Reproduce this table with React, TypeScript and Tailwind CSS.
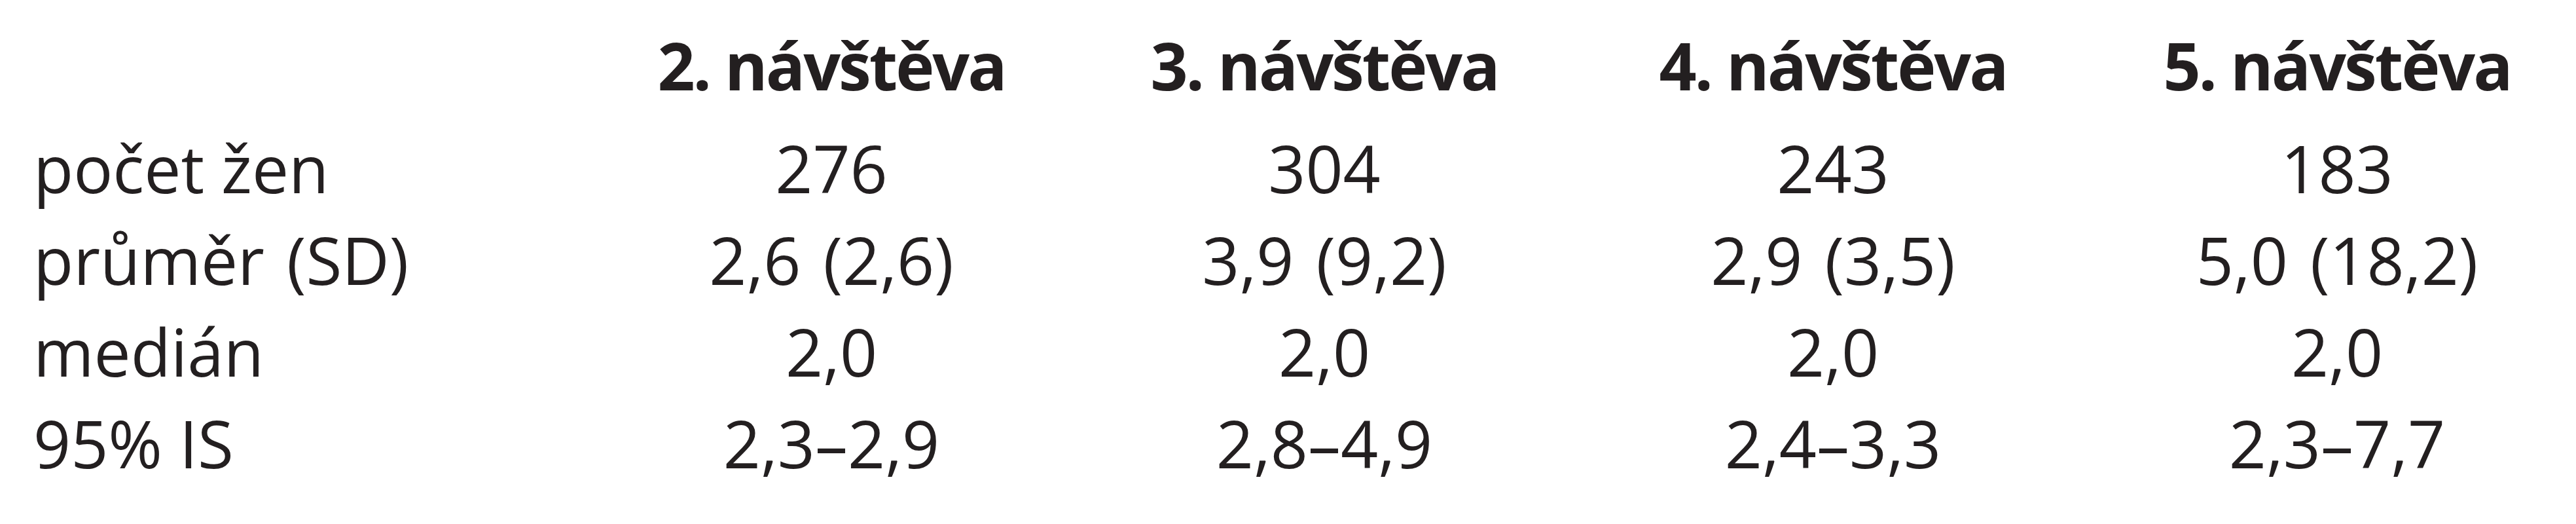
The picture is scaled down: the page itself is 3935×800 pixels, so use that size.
const headers = ["2. návštěva", "3. návštěva", "4. návštěva", "5. návštěva"];

// the parenthesised row sets a slightly wider gap before "("
const rows: [string, string[], string][] = [
  ["počet žen", ["276", "304", "243", "183"], ""],
  ["průměr (SD)", ["2,6 (2,6)", "3,9 (9,2)", "2,9 (3,5)", "5,0 (18,2)"], "[word-spacing:8px]"],
  ["medián", ["2,0", "2,0", "2,0", "2,0"], ""],
  ["95% IS", ["2,3–2,9", "2,8–4,9", "2,4–3,3", "2,3–7,7"], ""],
];

const gridClassName = "grid grid-cols-[834px_770px_736px_818px_722px]";

export default function App() {
  return (
    <div className="h-[800px] w-[3935px] bg-white pt-[29px] pl-[51px] font-['Open_Sans',sans-serif] text-[100px] leading-[140px] text-[#231f20]">
      <div className={`${gridClassName} mb-[17px] font-bold tracking-[-3px]`}>
        <div />
        {headers.map((h) => (
          <div key={h} className="text-center whitespace-nowrap">
            {h}
          </div>
        ))}
      </div>
      {rows.map(([label, values, extra]) => (
        <div key={label} className={`${gridClassName} font-normal ${extra}`}>
          <div className="whitespace-nowrap">{label}</div>
          {values.map((v, i) => (
            <div key={i} className="text-center whitespace-nowrap">
              {v}
            </div>
          ))}
        </div>
      ))}
    </div>
  );
}
